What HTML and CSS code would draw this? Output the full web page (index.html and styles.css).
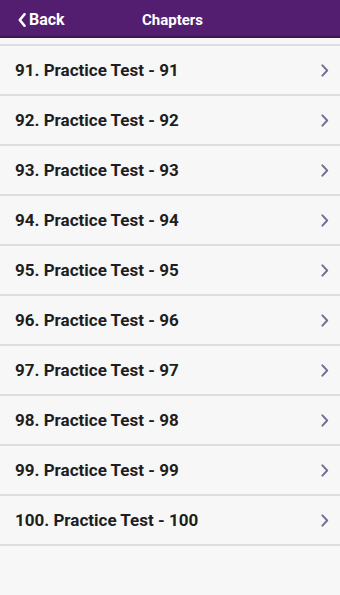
FILE: index.html
```html
<!DOCTYPE html>
<html>
<head>
<meta charset="utf-8">
<link rel="stylesheet" href="styles.css">
</head>
<body>
<header class="topbar">
  <div class="back">
    <svg class="back-icon" width="8" height="14" viewBox="0 0 8 14"><path d="M6.5 1.2 L1.8 7 L6.5 12.8" fill="none" stroke="#fff" stroke-width="2.6" stroke-linecap="round" stroke-linejoin="round"/></svg>
    <span>Back</span>
  </div>
  <div class="title">Chapters</div>
</header>
<main class="list">
  <div class="row"><span>91. Practice Test - 91</span><svg class="chev" width="8" height="13" viewBox="0 0 8 13"><path d="M1.4 1.3 L6.2 6.5 L1.4 11.7" fill="none" stroke="#6f6f92" stroke-width="1.9" stroke-linecap="round" stroke-linejoin="round"/></svg></div>
  <div class="row"><span>92. Practice Test - 92</span><svg class="chev" width="8" height="13" viewBox="0 0 8 13"><path d="M1.4 1.3 L6.2 6.5 L1.4 11.7" fill="none" stroke="#6f6f92" stroke-width="1.9" stroke-linecap="round" stroke-linejoin="round"/></svg></div>
  <div class="row"><span>93. Practice Test - 93</span><svg class="chev" width="8" height="13" viewBox="0 0 8 13"><path d="M1.4 1.3 L6.2 6.5 L1.4 11.7" fill="none" stroke="#6f6f92" stroke-width="1.9" stroke-linecap="round" stroke-linejoin="round"/></svg></div>
  <div class="row"><span>94. Practice Test - 94</span><svg class="chev" width="8" height="13" viewBox="0 0 8 13"><path d="M1.4 1.3 L6.2 6.5 L1.4 11.7" fill="none" stroke="#6f6f92" stroke-width="1.9" stroke-linecap="round" stroke-linejoin="round"/></svg></div>
  <div class="row"><span>95. Practice Test - 95</span><svg class="chev" width="8" height="13" viewBox="0 0 8 13"><path d="M1.4 1.3 L6.2 6.5 L1.4 11.7" fill="none" stroke="#6f6f92" stroke-width="1.9" stroke-linecap="round" stroke-linejoin="round"/></svg></div>
  <div class="row"><span>96. Practice Test - 96</span><svg class="chev" width="8" height="13" viewBox="0 0 8 13"><path d="M1.4 1.3 L6.2 6.5 L1.4 11.7" fill="none" stroke="#6f6f92" stroke-width="1.9" stroke-linecap="round" stroke-linejoin="round"/></svg></div>
  <div class="row"><span>97. Practice Test - 97</span><svg class="chev" width="8" height="13" viewBox="0 0 8 13"><path d="M1.4 1.3 L6.2 6.5 L1.4 11.7" fill="none" stroke="#6f6f92" stroke-width="1.9" stroke-linecap="round" stroke-linejoin="round"/></svg></div>
  <div class="row"><span>98. Practice Test - 98</span><svg class="chev" width="8" height="13" viewBox="0 0 8 13"><path d="M1.4 1.3 L6.2 6.5 L1.4 11.7" fill="none" stroke="#6f6f92" stroke-width="1.9" stroke-linecap="round" stroke-linejoin="round"/></svg></div>
  <div class="row"><span>99. Practice Test - 99</span><svg class="chev" width="8" height="13" viewBox="0 0 8 13"><path d="M1.4 1.3 L6.2 6.5 L1.4 11.7" fill="none" stroke="#6f6f92" stroke-width="1.9" stroke-linecap="round" stroke-linejoin="round"/></svg></div>
  <div class="row"><span>100. Practice Test - 100</span><svg class="chev" width="8" height="13" viewBox="0 0 8 13"><path d="M1.4 1.3 L6.2 6.5 L1.4 11.7" fill="none" stroke="#6f6f92" stroke-width="1.9" stroke-linecap="round" stroke-linejoin="round"/></svg></div>
</main>
</body>
</html>
```
FILE: styles.css
```css
html, body {
  margin: 0;
  padding: 0;
}
body {
  background: #f7f7f7;
  font-family: Roboto, "Liberation Sans", sans-serif;
  width: 340px;
  height: 595px;
  overflow: hidden;
}
.topbar {
  box-sizing: border-box;
  height: 38px;
  padding-top: 3px;
  background: #531d70;
  border-bottom: 2px solid #3f1456;
  display: flex;
  align-items: center;
  color: #fff;
  font-weight: 700;
  font-size: 15px;
}
.back {
  display: flex;
  align-items: center;
  gap: 3px;
  padding-left: 18px;
  width: 124px;
  font-size: 16px;
}
.back-icon {
  display: block;
}
.list {
  margin-top: 6px;
  border-top: 2px solid #dedede;
}
.row {
  height: 48px;
  border-bottom: 2px solid #dedede;
  display: flex;
  align-items: center;
  justify-content: space-between;
  padding: 0 11px 0 15px;
  font-size: 17px;
  font-weight: 700;
  color: #1e1e1e;
}
.chev {
  display: block;
}
```
